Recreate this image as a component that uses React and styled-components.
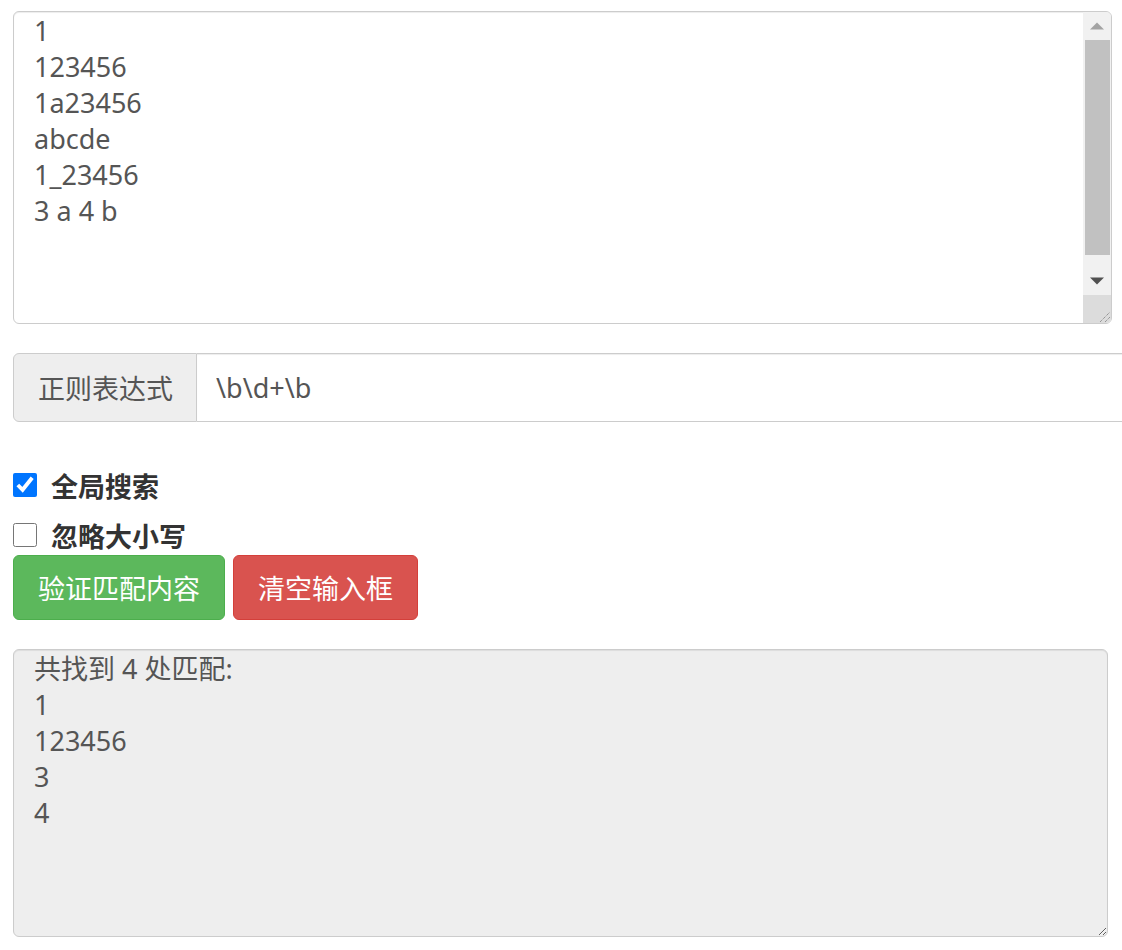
import React from "react";
import styled, { createGlobalStyle } from "styled-components";

const Global = createGlobalStyle`
  html, body { margin: 0; padding: 0; overflow: hidden; background: #fff; }
  body { font-family: "Noto Sans", "Noto Sans CJK SC", sans-serif; color: #333; }
  * { box-sizing: border-box; }
`;

const Page = styled.div`
  padding: 11px 0 0 13px;
  width: 1160px;
`;

const Frame = styled.div`
  position: relative;
  width: ${(p) => p.$w}px;
  height: ${(p) => p.$h}px;
`;

const Area = styled.textarea`
  display: block;
  width: 100%;
  height: 100%;
  padding: ${(p) => p.$pt}px 44px 4px 20px;
  font-family: "Noto Sans", "Noto Sans CJK SC", sans-serif;
  font-size: 27px;
  line-height: 36px;
  color: #555;
  background: ${(p) => (p.readOnly ? "#eee" : "#fff")};
  border: 1px solid #ccc;
  border-radius: 6px;
  box-shadow: inset 0 1px 1px rgba(0, 0, 0, 0.075);
  outline: none;
  resize: ${(p) => (p.$fakeBar ? "none" : "both")};
  overflow: hidden;
  cursor: ${(p) => (p.readOnly ? "not-allowed" : "text")};
`;

/* fake classic scrollbar drawn over the textarea's right edge */
const ScrollBar = styled.div`
  position: absolute;
  top: 1px;
  right: 1px;
  bottom: 1px;
  width: 28px;
  display: flex;
  flex-direction: column;
  background: #f1f1f1;
  border-top-right-radius: 5px;
  border-bottom-right-radius: 5px;
  overflow: hidden;
`;

const ArrowBtn = styled.div`
  height: 28px;
  flex: none;
  display: flex;
  align-items: center;
  justify-content: center;
`;

const Track = styled.div`
  flex: 1;
  display: flex;
  flex-direction: column;
  padding: 0 1px 12px 2px;
`;

const Thumb = styled.div`
  flex: 1;
  background: #c1c1c1;
`;

const Corner = styled.div`
  height: 28px;
  flex: none;
  background: #dcdcdc;
  display: flex;
  align-items: flex-end;
  justify-content: flex-end;
`;

const Tri = ({ up, color }) => (
  <svg width="14" height="8" viewBox="0 0 14 8">
    <polygon points={up ? "0,7.5 7,0.5 14,7.5" : "0,0.5 14,0.5 7,7.5"} fill={color} />
  </svg>
);

const Grip = () => (
  <svg width="12" height="12" viewBox="0 0 12 12">
    <line x1="1" y1="11" x2="11" y2="1" stroke="#777" strokeWidth="1" strokeDasharray="1 1" />
    <line x1="6" y1="11" x2="11" y2="6" stroke="#777" strokeWidth="1" strokeDasharray="1 1" />
  </svg>
);

const InputGroup = styled.div`
  display: flex;
  margin-top: 29px;
  height: 69px;
  width: 1130px;
`;

const Addon = styled.span`
  display: flex;
  align-items: center;
  padding: 0 24px;
  width: 184px;
  font-size: 27px;
  color: #555;
  background: #eee;
  border: 1px solid #ccc;
  border-radius: 6px 0 0 6px;
  white-space: nowrap;
`;

const TextInput = styled.input`
  flex: 1;
  min-width: 0;
  padding: 0 19px;
  font-family: "Noto Sans", "Noto Sans CJK SC", sans-serif;
  font-size: 27px;
  color: #555;
  border: 1px solid #ccc;
  border-left: none;
  border-radius: 0;
  outline: none;
  box-shadow: inset 0 1px 1px rgba(0, 0, 0, 0.075);
`;

const Checks = styled.div`
  display: flex;
  flex-direction: column;
  gap: 14px;
  margin-top: 45px;
`;

const CheckRow = styled.label`
  display: flex;
  align-items: center;
  gap: 14px;
  height: 36px;
  font-size: 27px;
  font-weight: 700;
  color: #333;
`;

const Box = styled.input`
  width: 24px;
  height: 24px;
  margin: 0;
  accent-color: #0075ff;
`;

const Buttons = styled.div`
  display: flex;
  gap: 8px;
  margin-top: 2px;
`;

const Btn = styled.button`
  height: 65px;
  padding: 0 24px;
  font-family: "Noto Sans", "Noto Sans CJK SC", sans-serif;
  font-size: 27px;
  color: #fff;
  background: ${(p) => (p.$kind === "danger" ? "#d9534f" : "#5cb85c")};
  border: 1px solid ${(p) => (p.$kind === "danger" ? "#d43f3a" : "#4cae4c")};
  border-radius: 6px;
  cursor: pointer;
`;

const ResultWrap = styled.div`
  margin-top: 29px;
`;

const source = "1\n123456\n1a23456\nabcde\n1_23456\n3 a 4 b\n\n\n";
const result = "共找到 4 处匹配:\n1\n123456\n3\n4";

export default function App() {
  return (
    <Page>
      <Global />
      <Frame $w={1099} $h={313}>
        <Area $pt={1} $fakeBar defaultValue={source} />
        <ScrollBar>
          <ArrowBtn><Tri up color="#a3a3a3" /></ArrowBtn>
          <Track><Thumb /></Track>
          <ArrowBtn><Tri color="#505050" /></ArrowBtn>
          <Corner><Grip /></Corner>
        </ScrollBar>
      </Frame>
      <InputGroup>
        <Addon>正则表达式</Addon>
        <TextInput defaultValue={"\\b\\d+\\b"} />
      </InputGroup>
      <Checks>
        <CheckRow>
          <Box type="checkbox" defaultChecked />
          全局搜索
        </CheckRow>
        <CheckRow>
          <Box type="checkbox" />
          忽略大小写
        </CheckRow>
      </Checks>
      <Buttons>
        <Btn $kind="success">验证匹配内容</Btn>
        <Btn $kind="danger">清空输入框</Btn>
      </Buttons>
      <ResultWrap>
        <Frame $w={1095} $h={288}>
          <Area $pt={1} readOnly value={result} />
        </Frame>
      </ResultWrap>
    </Page>
  );
}
